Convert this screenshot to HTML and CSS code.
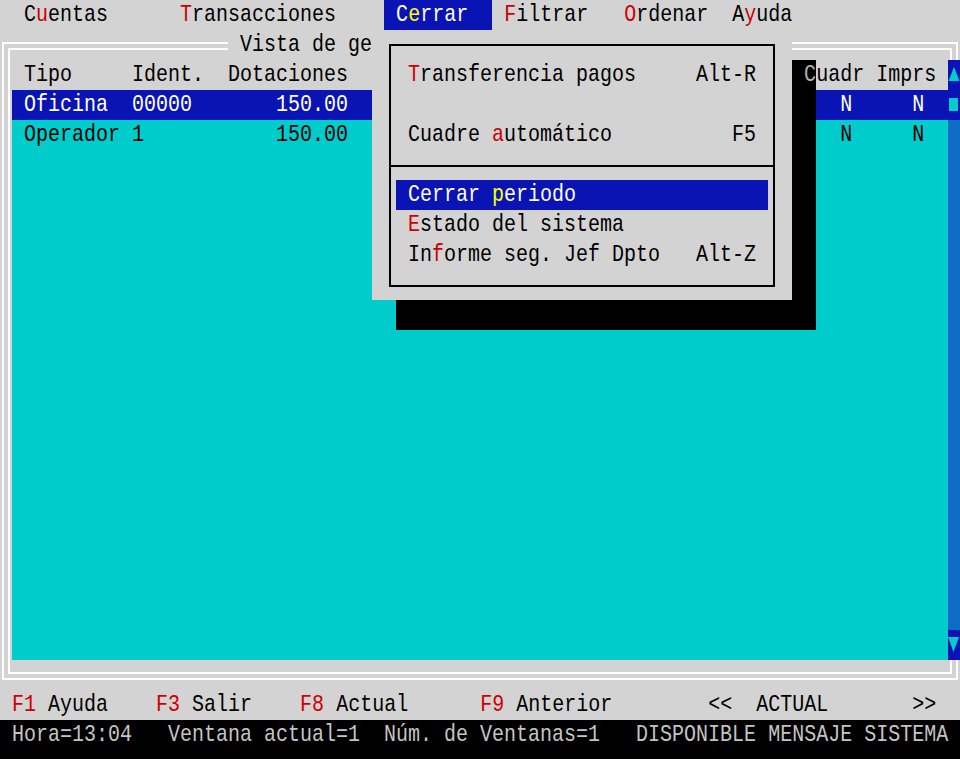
FILE: index.html
```html
<!DOCTYPE html>
<html>
<head>
<meta charset="utf-8">
<link rel="stylesheet" href="styles.css">
</head>
<body>
<div class="screen">
  <div class="row menubar"><span class="t">  C<span class="r">u</span>entas      <span class="r">T</span>ransacciones    </span><span class="hl"><span class="t"> C<span class="y">e</span>rrar  </span></span><span class="t"> <span class="r">F</span>iltrar   <span class="r">O</span>rdenar  A<span class="r">y</span>uda</span></div>

  <div class="window">
    <div class="frame-outer">
      <div class="frame-inner">
        <div class="content">
          <div class="table">
            <div class="row thead"><span class="t"> Tipo     Ident.  Dotaciones                                      Cuadr Imprs </span></div>
            <div class="row sel"><span class="t"> Oficina  00000       150.00                                         N     N</span></div>
            <div class="row"><span class="t"> Operador 1           150.00                                         N     N</span></div>
          </div>
          <div class="scrollbar">
            <div class="sb-cell dark"><svg width="12" height="30" viewBox="0 0 12 30"><polygon points="6,7 11.5,21 0.5,21" fill="#00cccc"/></svg></div>
            <div class="sb-cell dark"><svg width="12" height="30" viewBox="0 0 12 30"><rect x="1" y="8" width="9" height="13" fill="#00cccc"/></svg></div>
            <div class="sb-track"></div>
            <div class="sb-cell dark"><svg width="12" height="30" viewBox="0 0 12 30"><polygon points="0,7 11,7 5.5,22" fill="#00cccc"/></svg></div>
          </div>
        </div>
      </div>
    </div>
  </div>

  <div class="row fkeys"><span class="t"> <span class="r">F1</span> Ayuda    <span class="r">F3</span> Salir    <span class="r">F8</span> Actual      <span class="r">F9</span> Anterior        &lt;&lt;  ACTUAL       &gt;&gt;</span></div>
  <div class="row status"><span class="t"> Hora=13:04   Ventana actual=1  Núm. de Ventanas=1   DISPONIBLE MENSAJE SISTEMA</span></div>

  <div class="title"><span class="t"> Vista de ge</span></div>

  <div class="shadow"><div class="row"><span class="t">                                  C</span></div></div>

  <div class="dropdown">
    <div class="dbox">
      <div class="item"><span class="t"><span class="r">T</span>ransferencia pagos</span><span class="t">Alt-R</span></div>
      <div class="item"></div>
      <div class="item"><span class="t">Cuadre <span class="r">a</span>utomático</span><span class="t">F5</span></div>
      <div class="sep"></div>
      <div class="item active"><span class="t">Cerrar <span class="y">p</span>eriodo</span></div>
      <div class="item"><span class="t"><span class="r">E</span>stado del sistema</span></div>
      <div class="item"><span class="t">In<span class="r">f</span>orme seg. Jef Dpto</span><span class="t">Alt-Z</span></div>
    </div>
  </div>
</div>
</body>
</html>
```

FILE: styles.css
```css
* { box-sizing: border-box; }

html, body {
  margin: 0;
  padding: 0;
  background: #d3d3d3;
}

.screen {
  position: relative;
  width: 960px;
  height: 759px;
  overflow: hidden;
  background: #d3d3d3;
  font-family: "Liberation Mono", "DejaVu Sans Mono", monospace;
  font-size: 20px;
  line-height: 30px;
  color: #000;
}

.row {
  height: 30px;
  white-space: pre;
}

.t {
  display: inline-block;
  height: 30px;
  vertical-align: top;
  white-space: pre;
  transform: scaleY(1.18);
  transform-origin: 50% 50%;
}

.r { color: #cc0000; }
.y { color: #ffff00; }

.menubar { background: #d3d3d3; }

.hl {
  display: inline-block;
  height: 30px;
  vertical-align: top;
  background: #0a14b4;
  color: #fff;
}

.window {
  height: 660px;
  padding: 12px 2px 10px;
}

.frame-outer {
  height: 638px;
  border: 2px solid #fff;
  padding: 4px;
}

.frame-inner {
  height: 626px;
  border: 2px solid #fff;
  padding: 10px 0 12px 2px;
}

.content {
  display: flex;
  height: 600px;
  margin-right: -10px;
}

.table {
  flex: 1;
  background: #00cccc;
  color: #000;
}

.thead { background: #d3d3d3; color: #000; }

.sel { background: #0a14b4; color: #fff; }

.scrollbar {
  width: 12px;
  display: flex;
  flex-direction: column;
  background: #0f6cc4;
}

.sb-cell {
  height: 30px;
}

.sb-cell svg { display: block; }

.dark { background: #0a14b4; }

.sb-track {
  flex: 1;
  background: #0f6cc4;
}

.fkeys { background: #d3d3d3; }

.status {
  height: 39px;
  background: #000;
  color: #c4c4c4;
}

.title {
  position: absolute;
  left: 228px;
  top: 30px;
  height: 30px;
  background: #d3d3d3;
  white-space: pre;
  z-index: 1;
}

.shadow {
  position: absolute;
  left: 396px;
  top: 60px;
  width: 420px;
  height: 270px;
  background: #000;
  color: #b0b0b0;
  z-index: 2;
}

.dropdown {
  position: absolute;
  left: 372px;
  top: 30px;
  width: 420px;
  height: 270px;
  padding: 14px 17px 13px;
  background: #d3d3d3;
  z-index: 3;
}

.dbox {
  height: 100%;
  border: 2px solid #000;
  padding: 14px 5px 0;
}

.item {
  display: flex;
  justify-content: space-between;
  height: 30px;
  padding: 0 12px;
  white-space: pre;
}

.item.active {
  background: #0a14b4;
  color: #fff;
}

.sep {
  height: 2px;
  margin: 15px -5px 13px;
  background: #000;
}
```
